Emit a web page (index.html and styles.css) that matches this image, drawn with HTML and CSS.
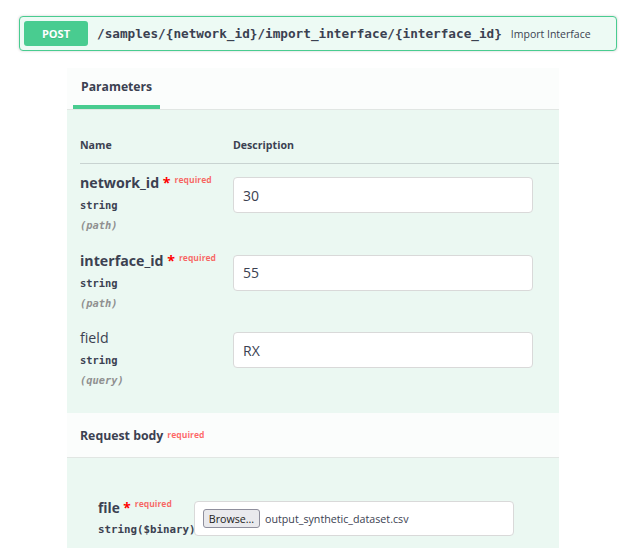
FILE: index.html
```html
<!DOCTYPE html>
<html>
<head>
<meta charset="utf-8">
<link rel="stylesheet" href="styles.css">
</head>
<body>
<div class="page">
  <div class="opblock">
    <span class="method">POST</span>
    <span class="path">/samples/{network_id}/import_interface/{interface_id}</span>
    <span class="summary">Import Interface</span>
  </div>
  <div class="panel">
    <div class="section-header">
      <div class="tab">Parameters</div>
    </div>
    <div class="params">
      <div class="prow head">
        <div class="col-name">Name</div>
        <div class="col-desc">Description</div>
      </div>
      <div class="prow param">
        <div class="col-name">
          <div class="pname req">network_id<span class="star">&nbsp;*</span><span class="reqtag">required</span></div>
          <div class="ptype">string</div>
          <div class="pin">(path)</div>
        </div>
        <div class="col-desc"><input class="pinput" type="text" value="30"></div>
      </div>
      <div class="prow param">
        <div class="col-name">
          <div class="pname req">interface_id<span class="star">&nbsp;*</span><span class="reqtag">required</span></div>
          <div class="ptype">string</div>
          <div class="pin">(path)</div>
        </div>
        <div class="col-desc"><input class="pinput" type="text" value="55"></div>
      </div>
      <div class="prow param">
        <div class="col-name">
          <div class="pname">field</div>
          <div class="ptype">string</div>
          <div class="pin">(query)</div>
        </div>
        <div class="col-desc"><input class="pinput" type="text" value="RX"></div>
      </div>
    </div>
    <div class="rb-header">
      <span class="rb-title">Request body</span><span class="reqtag rb-req">required</span>
    </div>
    <div class="body-form">
      <div class="file-row">
        <div class="file-label">
          <div class="fname-line">file<span class="star">&nbsp;*</span><span class="reqtag file-req">required</span></div>
          <div class="ptype big">string($binary)</div>
        </div>
        <div class="file-input">
          <button class="browse" type="button">Browse…</button>
          <span class="fname">output_synthetic_dataset.csv</span>
        </div>
      </div>
    </div>
  </div>
</div>
</body>
</html>
```

FILE: styles.css
```css
body {
  margin: 0;
  background: #ffffff;
  font-family: "Open Sans", "Noto Sans", sans-serif;
  color: #3b4151;
}

.page {
  padding: 16px 11px 0 19px;
}

.opblock {
  display: flex;
  align-items: center;
  height: 35px;
  box-sizing: border-box;
  padding: 0 4px;
  border: 1px solid #49cc90;
  border-radius: 4px;
  background: #edfaf4;
  box-shadow: 0 0 3px rgba(0, 0, 0, 0.19);
}

.method {
  flex: none;
  width: 64px;
  height: 25px;
  line-height: 25px;
  text-align: center;
  background: #49cc90;
  color: #ffffff;
  border-radius: 3px;
  font-weight: 700;
  font-size: 11px;
  text-shadow: 0 1px 0 rgba(0, 0, 0, 0.1);
}

.path {
  font-family: "DejaVu Sans Mono", monospace;
  font-weight: 700;
  font-size: 12.7px;
  padding: 0 9px;
  white-space: nowrap;
}

.summary {
  font-size: 10.5px;
  white-space: nowrap;
}

.panel {
  margin: 17px 0 0 48px;
  width: 492px;
}

.section-header {
  display: flex;
  align-items: flex-end;
  height: 42px;
  box-sizing: border-box;
  background: #fbfdfc;
  border-bottom: 1px solid #e1e6e3;
}

.tab {
  margin-left: 6px;
  padding: 9px 8px 8px;
  line-height: 20px;
  border-bottom: 4px solid #49cc90;
  font-weight: 700;
  font-size: 12.2px;
}

.params {
  background: #ebf8f2;
  padding: 27px 0 16px 13px;
}

.prow {
  display: flex;
}

.prow.head {
  padding-bottom: 10px;
  border-bottom: 1px solid rgba(59, 65, 81, 0.2);
  font-size: 10.6px;
  font-weight: 700;
  line-height: 16px;
}

.col-name {
  flex: none;
  width: 153px;
}

.col-desc {
  flex: 1;
}

.prow.param {
  padding: 8px 0 7.5px;
}

.pname {
  font-size: 14.2px;
  line-height: 22px;
  white-space: nowrap;
}

.pname.req {
  font-weight: 700;
}

.star {
  color: #ff0000;
}

.reqtag {
  font-size: 8.6px;
  font-weight: 700;
  line-height: 1;
  color: rgba(255, 0, 0, 0.6);
  padding-left: 4px;
  vertical-align: 5px;
}

.ptype {
  font-family: "DejaVu Sans Mono", monospace;
  font-weight: 700;
  font-size: 10.4px;
  line-height: 22px;
  white-space: nowrap;
}

.pin {
  font-family: "DejaVu Sans Mono", monospace;
  font-style: italic;
  font-weight: 700;
  font-size: 10.4px;
  line-height: 18px;
  color: #909090;
}

.pinput {
  display: block;
  margin: 5px 0 0;
  width: 300px;
  height: 36px;
  box-sizing: border-box;
  border: 1px solid #d9d9d9;
  border-radius: 4px;
  padding: 0 9px;
  font-family: "Open Sans", sans-serif;
  font-size: 14px;
  color: #3b4151;
  background: #ffffff;
  outline: none;
}

.rb-header {
  display: flex;
  align-items: center;
  height: 45px;
  box-sizing: border-box;
  padding: 2px 0 0 13px;
  background: #fbfdfc;
  border-bottom: 1px solid #e1e6e3;
}

.rb-title {
  font-size: 12.3px;
  font-weight: 700;
  line-height: 20px;
}

.rb-req {
  vertical-align: 6px;
}

.body-form {
  background: #ebf8f2;
  padding: 39px 0 7px 31px;
}

.file-row {
  display: flex;
  align-items: center;
}

.file-label {
  flex: none;
  width: 96px;
}

.fname-line {
  font-size: 13.7px;
  font-weight: 700;
  line-height: 22px;
  white-space: nowrap;
}

.file-req {
  vertical-align: 6px;
}

.ptype.big {
  font-size: 10.8px;
}

.file-input {
  display: flex;
  align-items: center;
  gap: 5px;
  width: 320px;
  height: 35px;
  box-sizing: border-box;
  padding-left: 8px;
  border: 1px solid #d9d9d9;
  border-radius: 4px;
  background: #ffffff;
}

.browse {
  width: 57px;
  height: 19px;
  box-sizing: border-box;
  padding: 0;
  border: 1px solid #8f8f9d;
  border-radius: 3px;
  background: #e9e9ed;
  font-family: "Open Sans", sans-serif;
  font-size: 10.7px;
  color: #1b1b1b;
}

.fname {
  font-size: 10.7px;
  color: #3b4151;
  white-space: nowrap;
}
```
